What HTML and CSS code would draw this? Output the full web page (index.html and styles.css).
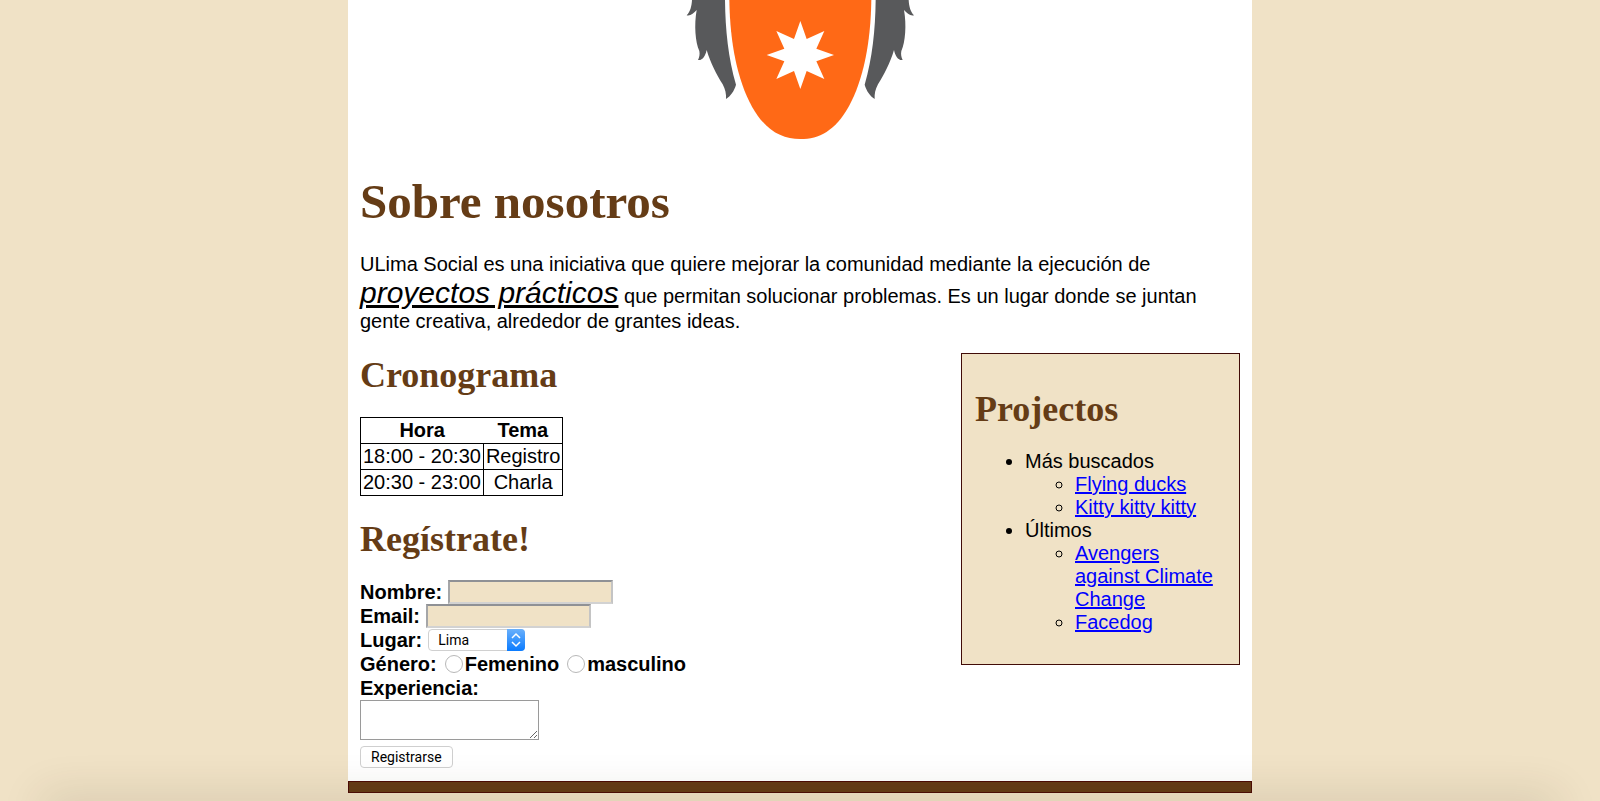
FILE: index.html
```html
<!DOCTYPE html>
<html lang="es">
<head>
<meta charset="utf-8">
<title>ULima Social</title>
<link rel="stylesheet" href="styles.css">
</head>
<body>
<main class="page">
  <svg class="logo" viewBox="0 0 780 420" role="img" aria-label="Universidad de Lima">
    <g fill="#58595b">
      <path d="M66 0C65 18 61 36 50 46C61 49 71 40 80 30C72 75 76 126 88 153C90 164 88 172 84 180C97 182 106 169 110 150C122 190 139 222 158 253C166 268 169 282 168 297C182 288 193 272 198 254C175 175 166 90 165 0Z"/>
      <path d="M716 0C717 18 721 36 732 46C721 49 711 40 702 30C710 75 706 126 694 153C692 164 694 172 698 180C685 182 676 169 672 150C660 190 643 222 624 253C616 268 613 282 614 297C600 288 589 272 584 254C607 175 616 90 617 0Z"/>
    </g>
    <path fill="#ff6916" d="M178 0C180 130 202 240 246 320C287 392 334 417 391 417C448 417 495 392 536 320C580 240 602 130 604 0Z"/>
    <path fill="#fff" d="M391 63L410 117L463 93L439 146L492 165L439 184L463 237L410 213L391 267L372 213L319 237L343 184L290 165L343 146L319 93L372 117Z"/>
  </svg>

  <h1>Sobre nosotros</h1>
  <p class="intro">ULima Social es una iniciativa que quiere mejorar la comunidad mediante la ejecución de <em>proyectos prácticos</em> que permitan solucionar problemas. Es un lugar donde se juntan gente creativa, alrededor de grantes ideas.</p>

  <div class="columns">
    <div class="content">
      <section>
        <h2>Cronograma</h2>
        <table class="schedule">
          <thead>
            <tr><th scope="col">Hora</th><th scope="col">Tema</th></tr>
          </thead>
          <tbody>
            <tr><td>18:00 - 20:30</td><td>Registro</td></tr>
            <tr><td>20:30 - 23:00</td><td>Charla</td></tr>
          </tbody>
        </table>
      </section>
      <section>
        <h2>Regístrate!</h2>
        <form class="signup">
          <div class="row"><label for="name">Nombre:</label><input class="field" id="name" type="text"></div>
          <div class="row"><label for="email">Email:</label><input class="field" id="email" type="email"></div>
          <div class="row">
            <label for="place">Lugar:</label>
            <span class="picker">
              <select id="place"><option>Lima</option></select>
              <svg class="arrows" viewBox="0 0 18 22" aria-hidden="true"><path d="M5 9L9 5L13 9M5 13L9 17L13 13"/></svg>
            </span>
          </div>
          <div class="row" role="radiogroup" aria-labelledby="gender">
            <span id="gender">Género:</span>
            <label class="choice"><input type="radio" name="gender">Femenino</label>
            <label class="choice"><input type="radio" name="gender">masculino</label>
          </div>
          <div class="row"><label for="experience">Experiencia:</label></div>
          <textarea id="experience"></textarea>
          <button type="submit">Registrarse</button>
        </form>
      </section>
    </div>

    <aside class="projects">
      <h2>Projectos</h2>
      <ul>
        <li>Más buscados
          <ul>
            <li><a href="#ducks">Flying ducks</a></li>
            <li><a href="#kitty">Kitty kitty kitty</a></li>
          </ul>
        </li>
        <li>Últimos
          <ul>
            <li><a href="#avengers">Avengers against Climate Change</a></li>
            <li><a href="#facedog">Facedog</a></li>
          </ul>
        </li>
      </ul>
    </aside>
  </div>
</main>
<footer class="footer"></footer>
<div class="shade"></div>
</body>
</html>
```
FILE: styles.css
```css
* {
  box-sizing: border-box;
}

body {
  margin: 0;
  padding: 0 16px 8px;
  background: #f0e2c6;
  color: #000;
  font: 20px/23px "Liberation Sans", Arial, sans-serif;
}

.page {
  max-width: 904px;
  margin: 0 auto;
  padding: 0 12px 13px;
  background: #fff;
}

.logo {
  display: block;
  width: 260px;
  height: 140px;
  margin: 0 auto;
}

h1,
h2 {
  margin: 0;
  color: #653c16;
  font-family: Georgia, "Liberation Serif", serif;
  font-weight: bold;
}

h1 {
  margin-top: 35px;
  font-size: 49px;
  line-height: 54px;
}

h2 {
  font-size: 36px;
  line-height: 44px;
}

.intro {
  margin: 24px 0 20px;
  line-height: normal;
}

.intro em {
  font-size: 30px;
  text-decoration: underline;
}

.columns {
  display: flex;
  justify-content: space-between;
  align-items: flex-start;
}

.schedule {
  margin: 20px 0 21px;
  border: 1px solid #000;
  border-collapse: collapse;
  text-align: center;
}

.schedule th {
  padding: 1px 2px;
}

.schedule td {
  padding: 1px 2px;
  border: 1px solid #000;
}

.signup {
  display: flex;
  flex-direction: column;
  align-items: flex-start;
  margin-top: 19px;
  font-weight: bold;
}

.row {
  display: flex;
  align-items: center;
  gap: 6px;
  height: 24px;
}

.field {
  width: 165px;
  height: 24px;
  padding: 1px 4px;
  border: 2px solid;
  border-color: #8f9195 #c4c4c4 #d2d2d2 #a5a6a8;
  background: #f0e2c6;
  font-size: 14px;
}

.picker {
  position: relative;
  display: flex;
}

select {
  width: 97px;
  height: 22px;
  padding: 0 20px 0 9px;
  border: 1px solid #d0d0d0;
  border-radius: 4px;
  appearance: none;
  background: #fff;
  color: #000;
  font: 14px Roboto, sans-serif;
}

.arrows {
  position: absolute;
  top: 0;
  right: 0;
  width: 18px;
  height: 22px;
  border-radius: 0 4px 4px 0;
  background: linear-gradient(#6ab0fb, #0a7bff);
  fill: none;
  stroke: #fff;
  stroke-width: 1.5;
  pointer-events: none;
}

.choice {
  display: flex;
  align-items: center;
  gap: 2px;
}

.choice input {
  width: 18px;
  height: 18px;
  margin: 0 0 0 2px;
  border: 1px solid #b8b8b8;
  border-radius: 50%;
  appearance: none;
  background: #fff;
}

.choice input:checked {
  border: 5px solid #0a7bff;
}

textarea {
  width: 179px;
  height: 40px;
  border: 1px solid #9a9a9a;
  background: transparent;
  font: 14px "Liberation Mono", monospace;
}

button {
  height: 22px;
  margin-top: 6px;
  padding: 0 10px;
  border: 1px solid #cfcfcf;
  border-radius: 4px;
  background: #fff;
  color: #000;
  font: 14px Roboto, sans-serif;
}

.projects {
  width: 279px;
  padding: 33px 13px 30px;
  border: 1px solid #410c08;
  background: #f0e2c6;
}

.projects ul {
  margin: 0;
  padding-left: 50px;
}

.projects > ul {
  margin-top: 19px;
}

.projects a {
  color: #00f;
}

.footer {
  max-width: 904px;
  height: 12px;
  margin: 0 auto;
  border: 1px solid #4c0c05;
  background: #653c16;
}

/* Soft shadow along the lower edge of the window */
.shade {
  position: fixed;
  right: 48px;
  bottom: -20px;
  left: 48px;
  height: 20px;
  box-shadow: 0 0 44px 6px rgba(60, 40, 20, 0.14);
  pointer-events: none;
}
```
